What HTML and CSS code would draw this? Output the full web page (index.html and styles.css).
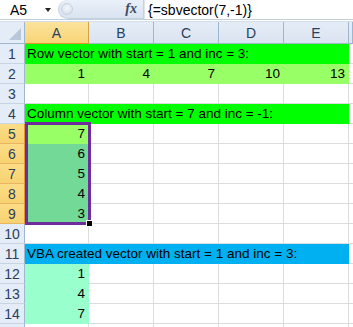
FILE: index.html
```html
<!DOCTYPE html>
<html lang="en">
  <head>
    <meta charset="UTF-8" />
    <title>sbvector - Excel</title>
    <link rel="stylesheet" href="styles.css">
  </head>
  <body>
    <div class="formula-bar">
      <div class="name-box">
        <span>A5</span>
        <span class="caret"></span>
      </div>
      <div class="fx-area">
        <span class="grip"></span>
        <span class="fx">fx</span>
      </div>
      <div class="formula">{=sbvector(7,-1)}</div>
    </div>

    <div class="sheet">
      <div class="row head">
        <div class="corner"><span class="corner-mark"></span></div>
        <div class="col-head active">A</div>
        <div class="col-head">B</div>
        <div class="col-head">C</div>
        <div class="col-head">D</div>
        <div class="col-head">E</div>
        <div class="col-head"></div>
      </div>

      <div class="row">
        <div class="row-head">1</div>
        <div class="cell span5 green">Row vector with start = 1 and inc = 3:</div>
        <div class="cell"></div>
      </div>
      <div class="row">
        <div class="row-head">2</div>
        <div class="cell num light">1</div>
        <div class="cell num light">4</div>
        <div class="cell num light">7</div>
        <div class="cell num light">10</div>
        <div class="cell num light">13</div>
        <div class="cell"></div>
      </div>
      <div class="row">
        <div class="row-head">3</div>
        <div class="cell"></div>
        <div class="cell"></div>
        <div class="cell"></div>
        <div class="cell"></div>
        <div class="cell"></div>
        <div class="cell"></div>
      </div>
      <div class="row">
        <div class="row-head">4</div>
        <div class="cell span5 green">Column vector with start = 7 and inc = -1:</div>
        <div class="cell"></div>
      </div>
      <div class="row">
        <div class="row-head active">5</div>
        <div class="cell num light">7</div>
        <div class="cell"></div>
        <div class="cell"></div>
        <div class="cell"></div>
        <div class="cell"></div>
        <div class="cell"></div>
      </div>
      <div class="row">
        <div class="row-head active">6</div>
        <div class="cell num picked">6</div>
        <div class="cell"></div>
        <div class="cell"></div>
        <div class="cell"></div>
        <div class="cell"></div>
        <div class="cell"></div>
      </div>
      <div class="row">
        <div class="row-head active">7</div>
        <div class="cell num picked">5</div>
        <div class="cell"></div>
        <div class="cell"></div>
        <div class="cell"></div>
        <div class="cell"></div>
        <div class="cell"></div>
      </div>
      <div class="row">
        <div class="row-head active">8</div>
        <div class="cell num picked">4</div>
        <div class="cell"></div>
        <div class="cell"></div>
        <div class="cell"></div>
        <div class="cell"></div>
        <div class="cell"></div>
      </div>
      <div class="row">
        <div class="row-head active">9</div>
        <div class="cell num picked">3</div>
        <div class="cell"></div>
        <div class="cell"></div>
        <div class="cell"></div>
        <div class="cell"></div>
        <div class="cell"></div>
      </div>
      <div class="row">
        <div class="row-head">10</div>
        <div class="cell"></div>
        <div class="cell"></div>
        <div class="cell"></div>
        <div class="cell"></div>
        <div class="cell"></div>
        <div class="cell"></div>
      </div>
      <div class="row">
        <div class="row-head">11</div>
        <div class="cell span5 blue">VBA created vector with start = 1 and inc = 3:</div>
        <div class="cell"></div>
      </div>
      <div class="row">
        <div class="row-head">12</div>
        <div class="cell num mint">1</div>
        <div class="cell"></div>
        <div class="cell"></div>
        <div class="cell"></div>
        <div class="cell"></div>
        <div class="cell"></div>
      </div>
      <div class="row">
        <div class="row-head">13</div>
        <div class="cell num mint">4</div>
        <div class="cell"></div>
        <div class="cell"></div>
        <div class="cell"></div>
        <div class="cell"></div>
        <div class="cell"></div>
      </div>
      <div class="row">
        <div class="row-head">14</div>
        <div class="cell num mint">7</div>
        <div class="cell"></div>
        <div class="cell"></div>
        <div class="cell"></div>
        <div class="cell"></div>
        <div class="cell"></div>
      </div>
      <div class="row">
        <div class="row-head"></div>
        <div class="cell"></div>
        <div class="cell"></div>
        <div class="cell"></div>
        <div class="cell"></div>
        <div class="cell"></div>
        <div class="cell"></div>
      </div>

      <!-- selection A5:A9 -->
      <div class="selection"></div>
      <div class="fill-handle"></div>
    </div>
  </body>
</html>
```

FILE: styles.css
```css
* {
  margin: 0;
  padding: 0;
  box-sizing: border-box;
}

html,
body {
  height: 100%;
  overflow: hidden;
}

body {
  background-color: white;
  font-family: "Liberation Sans", Arial, sans-serif;
  font-size: 13.5px;
  color: black;
}

/* Formula bar */
.formula-bar {
  display: flex;
  height: 20px;
  border-bottom: 1px solid #c3cfdd;
}

.name-box {
  width: 58px;
  display: flex;
  align-items: center;
  padding-left: 10px;
  font-size: 14px;
}

.caret {
  margin-left: 18px;
  width: 0;
  height: 0;
  border-left: 3.5px solid transparent;
  border-right: 3.5px solid transparent;
  border-top: 4px solid #222;
}

.fx-area {
  width: 86px;
  height: 19px;
  display: flex;
  align-items: center;
  justify-content: space-between;
  background: linear-gradient(#e9f0f8, #d9e4f1);
  border: 1px solid #c4d1e0;
  border-top: none;
  border-radius: 10px 0 0 10px;
  padding: 0 6px 0 2px;
}

.grip {
  width: 12px;
  height: 12px;
  border-radius: 50%;
  background: radial-gradient(circle at 50% 40%, #f4f7fb, #d2dbe6);
  border: 1px solid #c7d2de;
}

.fx {
  font-family: "Liberation Serif", serif;
  font-style: italic;
  font-weight: bold;
  font-size: 14px;
  color: #3c4a60;
}

.formula {
  flex: 1;
  padding-left: 3px;
  display: flex;
  align-items: center;
  font-size: 14px;
  border-left: 1px solid #dde4ec;
}

/* Sheet grid */
.sheet {
  position: relative;
  margin-top: 1px;
  height: 306px;
  overflow: hidden;
}

.row {
  display: grid;
  grid-template-columns: 25px 64px 65px 65px 65px 65px 1fr;
  height: 20px;
}

.row.head {
  height: 23px;
  border-top: 1px solid #d5dde8;
}

.corner {
  position: relative;
  background: #e4ecf7;
  border-right: 1px solid #9eb6ce;
  border-bottom: 1px solid #9eb6ce;
}

.corner-mark {
  position: absolute;
  right: 3px;
  bottom: 3px;
  width: 0;
  height: 0;
  border-left: 12px solid transparent;
  border-bottom: 12px solid #b7c6d8;
}

.col-head {
  display: flex;
  align-items: center;
  justify-content: center;
  background: linear-gradient(#e4ecf7, #dae4f0);
  border-right: 1px solid #9eb6ce;
  border-bottom: 1px solid #9eb6ce;
  color: #2a3f5c;
  font-size: 14px;
}

.col-head.active {
  background: linear-gradient(#fbe39c, #f9d477);
  border-right: 1px solid #d3a14a;
  border-bottom: 1px solid #e0962f;
}

.row-head {
  display: flex;
  align-items: center;
  justify-content: center;
  background: #e4ecf7;
  border-right: 1px solid #9eb6ce;
  border-bottom: 1px solid #c6d4e4;
  color: #2a3f5c;
  font-size: 14px;
}

.row-head.active {
  background: linear-gradient(#fbdd87, #f8d271);
  border-right: 1px solid #e0962f;
  border-bottom: 1px solid #e9b564;
}

.cell {
  display: flex;
  align-items: center;
  border-right: 1px solid #dadcdd;
  border-bottom: 1px solid #dadcdd;
  padding: 0 3px 0 2px;
  white-space: nowrap;
}

.cell.num {
  justify-content: flex-end;
}

.span5 {
  grid-column: span 5;
}

.green {
  background-color: #00ff00;
  border-color: #00ff00;
}

.light {
  background-color: #99ff66;
  border-color: #99ff66;
}

.picked {
  background-color: #73d996;
  border-color: #73d996;
}

.blue {
  background-color: #00b0f0;
  border-color: #00b0f0;
}

.mint {
  background-color: #99ffcc;
  border-color: #99ffcc;
}

/* Selection box over A5:A9 */
.selection {
  position: absolute;
  left: 25px;
  top: 101px;
  width: 66px;
  height: 103px;
  border: 3px solid #6f2c9f;
}

.fill-handle {
  position: absolute;
  left: 86px;
  top: 199px;
  width: 7px;
  height: 7px;
  background: black;
  border: 1px solid white;
}
```
